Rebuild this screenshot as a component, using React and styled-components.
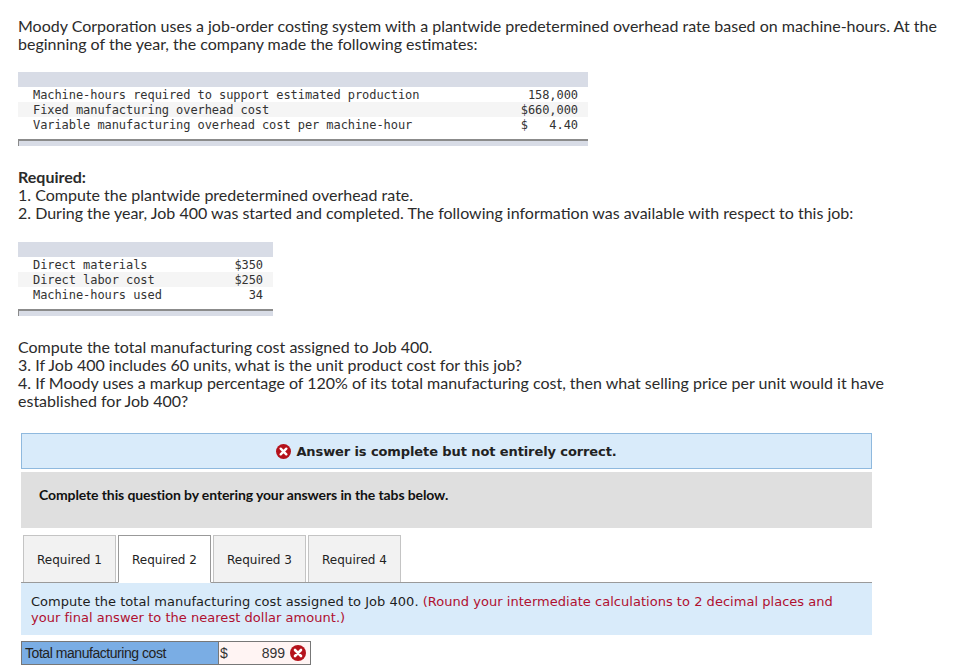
import styled, { createGlobalStyle } from 'styled-components';

const GlobalStyle = createGlobalStyle`
  html, body {
    background: #ffffff;
    margin: 0;
    padding: 0;
  }
`;

const Page = styled.div`
  box-sizing: border-box;
  color: #2b2b2b;
  font-family: 'Lato', 'Liberation Sans', sans-serif;
  height: 671px;
  overflow: hidden;
  padding: 17px 0 0 18px;
  width: 955px;
`;

const Paragraph = styled.p`
  font-size: 16px;
  line-height: 18px;
  margin: ${(props) => props.$margin || 0};
  width: 925px;
`;

const Strong = styled.strong`
  font-weight: 700;
`;

const SheetWrap = styled.div`
  background: #ffffff;
  font-family: 'DejaVu Sans Mono', 'Liberation Mono', monospace;
  font-size: 12px;
  margin: ${(props) => props.$margin};
  width: ${(props) => props.$width}px;
`;

const SheetHeader = styled.div`
  background: #d8dce6;
  height: 15px;
`;

const SheetRow = styled.div`
  align-items: center;
  background: ${(props) => (props.$shade ? '#f5f5f5' : '#ffffff')};
  color: #333333;
  display: flex;
  height: 15px;
  justify-content: space-between;
  letter-spacing: -0.07px;
  padding: 0 10px 0 15px;
  white-space: pre;
`;

const SheetFooter = styled.div`
  background: #d8dce6;
  border-left: 1px solid #8b8b8b;
  border-top: 2px solid #8b8b8b;
  box-sizing: border-box;
  height: 7px;
  margin-top: 7px;
`;

const Banner = styled.div`
  align-items: center;
  background: #d9ebfa;
  border: 1px solid #8fb9de;
  box-sizing: border-box;
  color: #222222;
  display: flex;
  font-family: 'DejaVu Sans', Verdana, sans-serif;
  font-size: 13px;
  font-weight: 700;
  gap: 5px;
  height: 36px;
  justify-content: center;
  letter-spacing: -0.1px;
  margin: 23px 0 0 3px;
  width: 851px;
`;

const Instruction = styled.div`
  background: #dfdfdf;
  box-sizing: border-box;
  color: #111111;
  font-family: 'Lato', 'Liberation Sans', sans-serif;
  font-size: 14px;
  font-weight: 700;
  height: 56px;
  letter-spacing: -0.11px;
  margin: 3px 0 0 3px;
  padding: 14px 0 0 18px;
  width: 851px;
`;

const TabBar = styled.div`
  border-bottom: 1px solid #9a9a9a;
  box-sizing: border-box;
  display: flex;
  gap: 2px;
  height: 48px;
  margin: 7px 0 0 3px;
  padding-left: 2px;
  width: 851px;
`;

const Tab = styled.div`
  align-items: center;
  background: ${(props) => (props.$active ? '#ffffff' : '#f2f2f2')};
  border: 1px solid ${(props) => (props.$active ? '#999999' : '#c4c4c4')};
  border-bottom: ${(props) => (props.$active ? '1px solid #ffffff' : '0')};
  box-sizing: border-box;
  color: #222222;
  display: flex;
  font-family: 'DejaVu Sans', Verdana, sans-serif;
  font-size: 12px;
  height: ${(props) => (props.$active ? '48px' : '47px')};
  justify-content: center;
  padding-top: 1px;
  width: 93px;
`;

const Note = styled.div`
  background: #d9ebfa;
  box-sizing: border-box;
  color: #1d1d1d;
  font-family: 'DejaVu Sans', Verdana, sans-serif;
  font-size: 13px;
  height: 52px;
  letter-spacing: 0.03px;
  line-height: 16px;
  margin-left: 3px;
  padding: 11px 30px 0 10px;
  width: 851px;
`;

const NoteRed = styled.span`
  color: #b01030;
`;

const AnswerRow = styled.div`
  border: 1px solid #777777;
  box-sizing: border-box;
  display: flex;
  font-family: 'Liberation Sans', Arial, sans-serif;
  font-size: 14px;
  height: 24px;
  margin: 6px 0 0 3px;
  width: 290px;
`;

const AnswerLabel = styled.div`
  align-items: center;
  background: #7aade4;
  border-right: 1px solid #777777;
  box-sizing: border-box;
  color: #222222;
  display: flex;
  letter-spacing: -0.45px;
  padding-left: 3px;
  width: 197px;
`;

const AnswerCell = styled.div`
  align-items: center;
  background: #fff4f3;
  color: #333333;
  display: flex;
  flex: 1;
  padding: 0 4px 0 1px;
`;

const AnswerValue = styled.span`
  flex: 1;
  padding-right: 5px;
  text-align: right;
`;

const WrongIcon = ({ size }) => (
  <svg width={size} height={size} viewBox="0 0 16 16" aria-hidden="true">
    <circle cx="8" cy="8" r="8" fill="#b5121b" />
    <path d="M5 5l6 6M11 5l-6 6" stroke="#ffffff" strokeWidth="2.6" strokeLinecap="round" />
  </svg>
);

const Sheet = ({ width, margin, rows }) => (
  <SheetWrap $width={width} $margin={margin}>
    <SheetHeader />
    {rows.map(([label, value], index) => (
      <SheetRow key={label} $shade={index % 2 === 1}>
        <span>{label}</span>
        <span>{value}</span>
      </SheetRow>
    ))}
    <SheetFooter />
  </SheetWrap>
);

const estimates = [
  ['Machine-hours required to support estimated production', '158,000'],
  ['Fixed manufacturing overhead cost', '$660,000'],
  ['Variable manufacturing overhead cost per machine-hour', '$   4.40'],
];

const jobCosts = [
  ['Direct materials', '$350'],
  ['Direct labor cost', '$250'],
  ['Machine-hours used', '34'],
];

const tabs = ['Required 1', 'Required 2', 'Required 3', 'Required 4'];

const App = () => (
  <Page>
    <GlobalStyle />
    <Paragraph>
      Moody Corporation uses a job-order costing system with a plantwide predetermined overhead rate based on
      machine-hours. At the beginning of the year, the company made the following estimates:
    </Paragraph>
    <Sheet width={570} margin="19px 0 0 0" rows={estimates} />
    <Paragraph $margin="22px 0 0 0">
      <Strong>Required:</Strong>
      <br />
      1. Compute the plantwide predetermined overhead rate.
      <br />
      2. During the year, Job 400 was started and completed. The following information was available with respect to
      this job:
    </Paragraph>
    <Sheet width={255} margin="20px 0 0 0" rows={jobCosts} />
    <Paragraph $margin="22px 0 0 0">
      Compute the total manufacturing cost assigned to Job 400.
      <br />
      3. If Job 400 includes 60 units, what is the unit product cost for this job?
      <br />
      4. If Moody uses a markup percentage of 120% of its total manufacturing cost, then what selling price per unit
      would it have established for Job 400?
    </Paragraph>
    <Banner>
      <WrongIcon size={15} />
      Answer is complete but not entirely correct.
    </Banner>
    <Instruction>Complete this question by entering your answers in the tabs below.</Instruction>
    <TabBar>
      {tabs.map((tab) => (
        <Tab key={tab} $active={tab === 'Required 2'}>
          {tab}
        </Tab>
      ))}
    </TabBar>
    <Note>
      Compute the total manufacturing cost assigned to Job 400.{' '}
      <NoteRed>
        (Round your intermediate calculations to 2 decimal places and your final answer to the nearest dollar amount.)
      </NoteRed>
    </Note>
    <AnswerRow>
      <AnswerLabel>Total manufacturing cost</AnswerLabel>
      <AnswerCell>
        $
        <AnswerValue>899</AnswerValue>
        <WrongIcon size={16} />
      </AnswerCell>
    </AnswerRow>
  </Page>
);

export default App;
